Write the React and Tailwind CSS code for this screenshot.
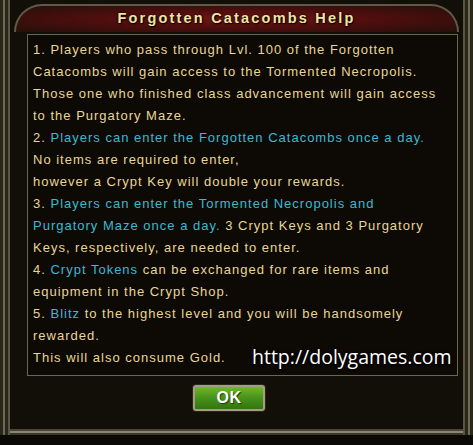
export default function App() {
  const cream = "text-[#e8d597]";
  const cyan = "text-[#3ab9d2]";

  return (
    <div className="w-[473px] h-[445px] bg-[#0b0905] overflow-hidden relative font-['Liberation_Sans',Arial,sans-serif]">
      {/* frame */}
      <div className="h-[435px] bg-[#120f09] flex flex-col shadow-[inset_3px_0_0_#2a2619,inset_5px_0_0_#6e6a58,inset_8px_0_0_#2a2619,inset_10px_0_0_#5a5646,inset_-3px_0_0_#2a2619,inset_-5px_0_0_#6e6a58,inset_-8px_0_0_#2a2619,inset_-10px_0_0_#5a5646,inset_0_-2px_0_#3a3628,inset_0_-4px_0_#8a8470,inset_0_-6px_0_#4a4636]">
        {/* title bar */}
        <div className="mx-[14px] mt-[4px] h-[28px] rounded-t-[40px] border-t-2 border-x-2 border-[#5f5a48] bg-[radial-gradient(ellipse_at_center,#721616_0%,#4e0e0e_45%,#241009_100%)] flex items-center justify-center">
          <span className="text-[14.5px] font-bold tracking-[2.2px] text-[#f2e2a4] [text-shadow:1px_1px_1px_#000,0_0_3px_#000]">
            Forgotten Catacombs Help
          </span>
        </div>

        {/* content panel */}
        <div className="ml-[27px] mr-[15px] mt-[2px] h-[342px] border border-[#6b6650] bg-[#0d0a05] pl-[5px] pt-[4px] text-[13px] leading-[22px] tracking-[1px] relative">
          <p className={cream}>1. Players who pass through Lvl. 100 of the Forgotten</p>
          <p className={cream}>Catacombs will gain access to the Tormented Necropolis.</p>
          <p className={cream}>Those one who finished class advancement will gain access</p>
          <p className={cream}>to the Purgatory Maze.</p>
          <p className={cream}>
            2. <span className={cyan}>Players can enter the Forgotten Catacombs once a day.</span>
          </p>
          <p className={cream}>No items are required to enter,</p>
          <p className={cream}>however a Crypt Key will double your rewards.</p>
          <p className={cream}>
            3. <span className={cyan}>Players can enter the Tormented Necropolis and</span>
          </p>
          <p className={cream}>
            <span className={cyan}>Purgatory Maze once a day.</span> 3 Crypt Keys and 3 Purgatory
          </p>
          <p className={cream}>Keys, respectively, are needed to enter.</p>
          <p className={cream}>
            4. <span className={cyan}>Crypt Tokens</span> can be exchanged for rare items and
          </p>
          <p className={cream}>equipment in the Crypt Shop.</p>
          <p className={cream}>
            5. <span className={cyan}>Blitz</span> to the highest level and you will be handsomely
          </p>
          <p className={cream}>rewarded.</p>
          <p className={cream}>This will also consume Gold.</p>

          <span className="absolute left-[224px] top-[310px] text-[19.5px] leading-[24px] tracking-normal text-white font-['Open_Sans',sans-serif] [text-shadow:1px_1px_2px_#000,0_0_3px_#000]">
            http://dolygames.com
          </span>
        </div>

        {/* button */}
        <div className="flex justify-center mt-[9px] pr-[15px]">
          <button className="w-[72px] h-[26px] rounded-[3px] border-2 border-[#a49d84] bg-[linear-gradient(180deg,#72b628_0%,#46931a_50%,#33740f_100%)] flex items-center justify-center shadow-[0_0_0_1px_#2a2618]">
            <span className="text-[16px] font-bold text-white tracking-[0.5px] [text-shadow:1px_1px_1px_#1c3a06]">OK</span>
          </button>
        </div>
      </div>
    </div>
  );
}
